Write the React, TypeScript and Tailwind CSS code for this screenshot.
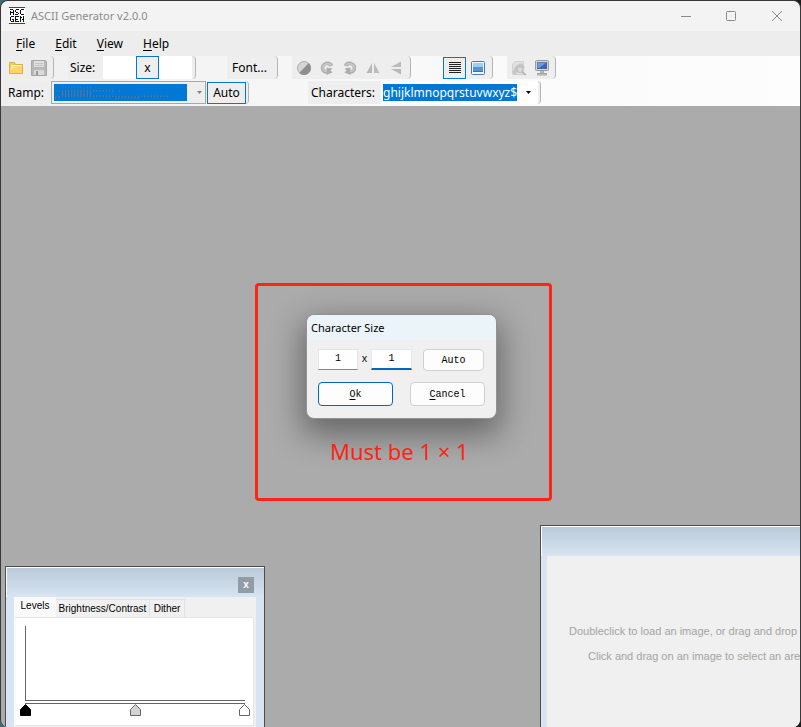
import type { ReactNode } from "react";

const ui = "font-['Noto_Sans',sans-serif]";

function AppIcon() {
  return (
    <svg width="18" height="18" viewBox="0 0 18 18" shapeRendering="crispEdges" aria-hidden="true">
      <rect x="1" y="0" width="16" height="17" fill="#fff" />
      <path d="M1 .5h16M1 16.500h16" stroke="#e60000" />
      <path
        d="M2.500 8V3.500M2 2.500H5M5.500 3V8M2 5.500H5M11 2.500H8M7.500 3V5M8 5.500H10M10.500 6V7M7 7.500H10M16 2.500H13M12.500 3V7M13 7.500H16M6 9.500H3M2.500 10V14M3 14.500H6M5.500 12V15M4 12.500H6M11 9.500H7.500V14.500H11M7.500 12.500H10M12.500 15V9M13 10.500H14M14 12.500H15M15.500 9V15"
        fill="none"
        stroke="#111"
      />
    </svg>
  );
}

function FolderIcon() {
  return (
    <svg width="16" height="16" viewBox="0 0 16 16" aria-hidden="true">
      <path d="M1.500 13.500V2.500h5l1 2h7v9z" fill="#f7c64d" stroke="#e3ad45" />
      <path d="M3 6.500h11v6.500H2z" fill="#ffedb0" />
      <path d="M2 13V10l3-2h2l1-1.500h6V13z" fill="#fbd566" />
      <path d="M3 5.500h10.500" stroke="#fff6d8" fill="none" />
    </svg>
  );
}

function SaveIcon() {
  return (
    <svg width="18" height="18" viewBox="0 0 18 18" aria-hidden="true">
      <path d="M1.500 1.500h14l1 1v14h-15z" fill="#b8b8b8" stroke="#a6a6a6" />
      <rect x="4" y="2" width="10" height="6" fill="#e0e0e0" />
      <path d="M5 4.500h8M5 6.500h8" stroke="#c4c4c4" />
      <rect x="4" y="11" width="10" height="5" fill="#dadada" />
      <rect x="6" y="12" width="2" height="4" fill="#999" />
    </svg>
  );
}

function ContrastIcon() {
  return (
    <svg width="16" height="16" viewBox="0 0 16 16" aria-hidden="true">
      <circle cx="8" cy="8" r="6.500" fill="#d4d4d4" stroke="#acacac" />
      <path d="M12.900 3.100A6.900 6.900 0 0 1 3.100 12.900z" fill="#8e8e8e" />
    </svg>
  );
}

function RotateIcon({ flip = false }: { flip?: boolean }) {
  return (
    <svg width="16" height="16" viewBox="0 0 16 16" aria-hidden="true">
      <g transform={flip ? "matrix(-1 0 0 1 16 0)" : undefined}>
        <path d="M12.500 6C11.500 3.800 9 3 6.800 3.600C4.200 4.400 3 6.800 3.700 9C4.300 11 6 12.200 8.500 12" fill="none" stroke="#adadad" strokeWidth="3.600" />
        <path d="M7.500 15V7.500L13.500 8.500L11.500 10.500L13.500 12.500z" fill="#adadad" />
        <path d="M12 5.500C11 4 9 3.300 7 4C4.600 4.800 3.500 6.800 4.100 8.800C4.700 10.600 6 11.500 8 11.500" fill="none" stroke="#c9c9c9" strokeWidth="1.600" />
      </g>
    </svg>
  );
}

function FlipIcon({ vertical = false }: { vertical?: boolean }) {
  return (
    <svg width="16" height="16" viewBox="0 0 16 16" aria-hidden="true">
      <g transform={vertical ? "rotate(-90 8 8)" : undefined}>
        <path d="M7 3v10H1.500z" fill="#b8b8b8" />
        <path d="M9 3v10H14.500z" fill="#bcbcbc" />
      </g>
    </svg>
  );
}

function LinesIcon() {
  return (
    <svg width="14" height="14" viewBox="0 0 14 14" shapeRendering="crispEdges" aria-hidden="true">
      <path d="M1 1.500h12M1 3.500h12M1 5.500h12M1 7.500h12M1 9.500h12M1 11.500h12" stroke="#222" />
    </svg>
  );
}

function PictureIcon() {
  return (
    <svg width="16" height="16" viewBox="0 0 16 16" aria-hidden="true">
      <rect x="1.500" y="1.500" width="13" height="13" rx="1" fill="#f4f8fc" stroke="#4a76b4" />
      <rect x="3" y="3" width="10" height="8" fill="#4f95d8" />
      <rect x="3" y="3" width="10" height="4" fill="#9fcdf2" />
      <path d="M3 11.500h10" stroke="#3a70b4" />
    </svg>
  );
}

function PreviewIcon() {
  return (
    <svg width="16" height="16" viewBox="0 0 16 16" aria-hidden="true">
      <path d="M1.500 14.500V4L4.500 1.500H12.500v13z" fill="#e0e0e0" stroke="#d2d2d2" />
      <path d="M2 14C2 8 5 4 11 3.500L14 7.500l-4 2-3 1-2 4z" fill="#c6c6c6" />
      <circle cx="9" cy="9.500" r="3" fill="#dadada" stroke="#b8b8b8" />
      <path d="M11 12l4 3" stroke="#b8b8b8" strokeWidth="2" />
    </svg>
  );
}

function MonitorIcon() {
  return (
    <svg width="16" height="16" viewBox="0 0 16 16" aria-hidden="true">
      <rect x="1.500" y=".5" width="13" height="10" rx="1" fill="#d6d6d0" stroke="#9a9a96" />
      <rect x="3" y="2" width="10" height="7" fill="#3b66b8" />
      <path d="M3.500 2.500h9L5 8H3.500z" fill="#7299d8" />
      <path d="M6 11h4v2H6z" fill="#b4b4b4" />
      <path d="M3.500 13.500h9v1.500h-9z" fill="#ddd" stroke="#a0a0a0" />
    </svg>
  );
}

function DownArrow({ fill }: { fill: string }) {
  return (
    <svg width="5" height="3" viewBox="0 0 5 3" className="shrink-0" aria-hidden="true">
      <path d="M0 0h5L2.500 3z" fill={fill} />
    </svg>
  );
}

function Strip({ children, className }: { children: ReactNode; className: string }) {
  return (
    <div className={`flex h-[23px] shrink-0 items-center rounded-r border-r border-[#b5b5b5] bg-[#eeeeee] ${className}`}>
      {children}
    </div>
  );
}

function ToolButton({ label, children }: { label: string; children: ReactNode }) {
  return (
    <button aria-label={label} className="flex h-[22px] w-[23px] items-center justify-center">
      {children}
    </button>
  );
}

function MenuItem({ name }: { name: string }) {
  return (
    <button>
      <span className="underline underline-offset-2">{name[0]}</span>
      {name.slice(1)}
    </button>
  );
}

function Marker({ fill }: { fill: string }) {
  return (
    <svg width="11" height="12" viewBox="0 0 11 12" aria-hidden="true">
      <path d="M.5 11.500V5.500L5.500.5L10.500 5.500V11.500z" fill={fill} stroke={fill === "#000" ? "#000" : "#666"} />
    </svg>
  );
}

function LevelsWindow() {
  return (
    <section
      aria-label="Levels"
      className="absolute bottom-[-8px] left-1 flex h-[169px] w-[260px] flex-col border border-[#4d4d4d] bg-[#d9e4f2] font-['Liberation_Sans',sans-serif] text-[10px] leading-3 text-black"
    >
      <header className="flex h-[30px] shrink-0 items-center justify-end border-l border-t border-white bg-linear-to-b from-[#bacad8] to-[#d7e4f2] pr-2.5 pt-1">
        <button aria-label="Close" className="flex size-4 items-center justify-center bg-[#919ca7] font-bold text-white">
          x
        </button>
      </header>
      <div className="mx-2 flex min-h-0 flex-1 flex-col bg-[#f0f0f0] pr-0.5">
        <div role="tablist" className="flex h-5 shrink-0 items-end">
          <button role="tab" aria-selected="true" className="h-5 w-[42px] bg-[#fafafa] pb-0.5">
            Levels
          </button>
          <button role="tab" className="h-[18px] w-[94px] border-r border-t border-[#e2e2e2]">
            Brightness/Contrast
          </button>
          <button role="tab" className="h-[18px] w-[35px] border-r border-t border-[#e2e2e2]">
            Dither
          </button>
        </div>
        <div role="tabpanel" className="flex h-[109px] flex-col border border-l-2 border-[#e6e6e6] border-l-[#fafafa] bg-white px-[9px] pt-2">
          <div className="h-[75px] w-[220px] border-b border-l border-[#666]" />
          <div className="mt-0.5 h-px w-[220px] bg-[#666]" />
          <div className="ml-[-5px] flex w-[230px] justify-between">
            <Marker fill="#000" />
            <Marker fill="#d3d3d3" />
            <Marker fill="#fff" />
          </div>
        </div>
      </div>
    </section>
  );
}

function ImageWindow() {
  return (
    <section
      aria-label="Image"
      className="absolute bottom-[-8px] left-[539px] right-[-40px] flex h-[210px] flex-col border border-[#4d4d4d] bg-[#d9e4f2]"
    >
      <header className="h-[30px] shrink-0 border-l border-t border-white bg-linear-to-b from-[#bacad8] to-[#d7e4f2]" />
      <div className="ml-[6px] flex-1 space-y-[9px] whitespace-nowrap bg-[#f0f0f0] pl-[22px] pt-[67px] font-['Liberation_Sans',sans-serif] text-[11px] leading-4 text-[#a3a3a3]">
        <p>Doubleclick to load an image, or drag and drop</p>
        <p className="pl-[19px]">Click and drag on an image to select an area</p>
      </div>
    </section>
  );
}

function SizeDialog() {
  const mono = "font-['Liberation_Mono',monospace] text-[10px]";
  return (
    <div className="absolute left-[254px] top-[177px] flex h-[218px] w-[297px] flex-col items-start rounded border-[3px] border-[#fb2416] pl-12 pt-7">
      <div
        role="dialog"
        aria-label="Character Size"
        className="h-[105px] w-[191px] rounded-lg border border-[#929292] bg-[#f0f0f0] text-black shadow-[0_12px_32px_4px_rgba(0,0,0,0.4)]"
      >
        <h2 className={`${ui} h-[25px] rounded-t-lg bg-[#ebf4f8] pl-1 text-[11px] leading-[26px]`}>Character Size</h2>
        <div className={`${mono} px-[11px] pt-2`}>
          <div className="flex h-[22px] items-center">
            <input aria-label="Width" defaultValue="1" className="h-[21px] w-10 border border-[#e5e5e5] border-b-[#868686] bg-white pb-0.5 text-center" />
            <span className="w-[13px] text-center">x</span>
            <input aria-label="Height" defaultValue="1" className="h-[21px] w-[41px] border border-b-2 border-[#e0e8f0] border-b-[#0067c0] bg-white pb-px text-center outline-none" />
            <button className="ml-[11px] mt-0.5 h-[22px] w-[61px] rounded border border-[#d0d0d0] bg-[#fdfdfd]">Auto</button>
          </div>
          <div className="flex gap-[17px] pt-3">
            <button className="h-6 w-[75px] rounded border border-[#0067c0] bg-[#fdfdfd]">
              <span className="underline underline-offset-2">O</span>k
            </button>
            <button className="h-6 w-[75px] rounded border border-[#d0d0d0] bg-[#fdfdfd]">
              <span className="underline underline-offset-2">C</span>ancel
            </button>
          </div>
        </div>
      </div>
      <p className={`${ui} ml-6 mt-[18px] text-[22px] leading-7 text-[#fb2416]`}>Must be 1 × 1</p>
    </div>
  );
}

export default function App() {
  return (
    <div className="h-screen bg-linear-to-r from-[#3d6f7b] via-[#2d2d2d] via-5% to-[#1c1c1c]">
      <div className={`${ui} flex h-full flex-col overflow-hidden rounded-lg border border-b-0 border-[#383838] bg-[#ababab] text-[12px] text-black`}>
        <header className="flex h-[30px] shrink-0 items-center bg-[#f3f3f3] pl-[7px] text-[#8b8b8b]">
          <AppIcon />
          <h1 className="ml-[5px] flex-1 text-[11px]">ASCII Generator v2.0.0</h1>
          <div className="flex">
            <button aria-label="Minimize" className="flex h-[30px] w-[45px] items-center justify-center">
              <svg width="10" height="10" viewBox="0 0 10 10"><path d="M0 5.500h10" stroke="#8b8b8b" /></svg>
            </button>
            <button aria-label="Maximize" className="flex h-[30px] w-[45px] items-center justify-center">
              <svg width="10" height="10" viewBox="0 0 10 10"><rect x=".5" y=".5" width="9" height="9" rx="1" fill="none" stroke="#8b8b8b" /></svg>
            </button>
            <button aria-label="Close" className="flex h-[30px] w-[47px] items-center justify-center">
              <svg width="10" height="10" viewBox="0 0 10 10"><path d="M0 0l10 10M10 0L0 10" stroke="#8b8b8b" /></svg>
            </button>
          </div>
        </header>

        <nav className="flex h-[25px] shrink-0 items-center gap-5 bg-[#ededed] pl-[15px]">
          <MenuItem name="File" />
          <MenuItem name="Edit" />
          <MenuItem name="View" />
          <MenuItem name="Help" />
        </nav>

        <div className="shrink-0 bg-linear-to-r from-[#efefef] via-[#f9f9f9] to-[#fdfdfd]">
          <div className="flex h-[25px] items-start">
            <Strip className="w-[53px] pl-[3px]">
              <ToolButton label="Open"><FolderIcon /></ToolButton>
              <ToolButton label="Save"><SaveIcon /></ToolButton>
            </Strip>
            <Strip className="ml-[14px] w-[128px] pl-[2px]">
              <label htmlFor="size-w" className="w-[33px]">Size:</label>
              <input id="size-w" className="h-[23px] w-[33px] bg-white" />
              <button className="h-[23px] w-[23px] border border-[#0078d7] leading-5">x</button>
              <input aria-label="Size height" className="h-[23px] w-[33px] bg-white" />
            </Strip>
            <Strip className="ml-[31px] w-[51px] pl-[5px]">
              <button>Font...</button>
            </Strip>
            <Strip className="ml-[14px] w-[119px]">
              <ToolButton label="Brightness"><ContrastIcon /></ToolButton>
              <ToolButton label="Rotate left"><RotateIcon /></ToolButton>
              <ToolButton label="Rotate right"><RotateIcon flip /></ToolButton>
              <ToolButton label="Flip horizontally"><FlipIcon /></ToolButton>
              <ToolButton label="Flip vertically"><FlipIcon vertical /></ToolButton>
            </Strip>
            <Strip className="ml-[32px] w-[50px]">
              <button aria-label="Text view" className="flex h-[22px] w-[23px] items-center justify-center border border-[#0078d7]">
                <LinesIcon />
              </button>
              <ToolButton label="Image view"><PictureIcon /></ToolButton>
            </Strip>
            <Strip className="ml-[14px] w-[49px]">
              <ToolButton label="Print preview"><PreviewIcon /></ToolButton>
              <ToolButton label="Display"><MonitorIcon /></ToolButton>
            </Strip>
          </div>
          <div className="flex h-[25px] items-start">
            <Strip className="w-[248px] pl-[7px]">
              <label htmlFor="ramp" className="w-[43px]">Ramp:</label>
              <div className="flex h-[23px] w-[155px] items-center border border-[#a8a8a8] pl-0.5">
                <select id="ramp" className="mr-[10px] h-[17px] w-[133px] appearance-none bg-[#0078d7] leading-4 text-[#5d7394]">
                  <option>;;iiiiiiiiii:::::::,;,,,,,,.........</option>
                </select>
                <DownArrow fill="#808080" />
              </div>
              <button className="ml-px h-[22px] w-[39px] border border-[#0078d7]">Auto</button>
            </Strip>
            <Strip className="ml-[59px] w-[233px] pl-[3px]">
              <label htmlFor="characters" className="w-[70px]">Characters:</label>
              <div className="flex h-[23px] w-[157px] items-center bg-white pl-0.5">
                <select id="characters" className="mr-[9px] h-[17px] w-[134px] appearance-none bg-[#0078d7] leading-4 text-white">
                  <option>ghijklmnopqrstuvwxyz$</option>
                </select>
                <DownArrow fill="#000" />
              </div>
            </Strip>
          </div>
        </div>

        <main className="relative min-h-0 flex-1 overflow-hidden bg-[#ababab]">
          <SizeDialog />
          <LevelsWindow />
          <ImageWindow />
        </main>
      </div>
    </div>
  );
}
